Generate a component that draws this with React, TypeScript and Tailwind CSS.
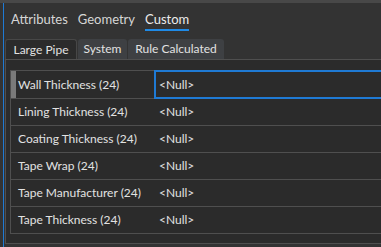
const rows = [
  'Wall Thickness (24)',
  'Lining Thickness (24)',
  'Coating Thickness (24)',
  'Tape Wrap (24)',
  'Tape Manufacturer (24)',
  'Tape Thickness (24)',
];

export default function App() {
  return (
    <div className="w-[381px] h-[247px] bg-[#333333] flex flex-col overflow-hidden text-[#e2e2e2] font-['Lato',sans-serif] whitespace-nowrap">
      <div className="h-[3px] bg-[#484848]" />
      <div className="flex-1 flex min-h-0">
        <div className="w-[3px]" />
        <div className="w-px bg-[#1f7ad4]" />
        <div className="flex-1 flex flex-col min-w-0">
          {/* top tabs */}
          <div className="h-[36px] flex items-start pl-[7px] gap-[10px] pt-[7px] text-[13px]">
            <span className="leading-[19px] text-[#d6d6d6]">Attributes</span>
            <span className="leading-[19px] text-[#d6d6d6]">Geometry</span>
            <span className="leading-[19px] border-b-2 border-[#1f8ae6] text-[#ececec]">Custom</span>
          </div>

          {/* sub tabs */}
          <div className="h-[20px] flex pl-px text-[12px] leading-[19px]">
            <div className="w-[72px] bg-[#2b2b2b] border border-b-0 border-[#474747] rounded-t-[3px] flex justify-center">
              Large Pipe
            </div>
            <div className="w-[49px] ml-px bg-[#3e4043] rounded-t-[3px] flex justify-center">System</div>
            <div className="w-[96px] ml-px bg-[#3e4043] rounded-t-[3px] flex justify-center">Rule Calculated</div>
          </div>

          {/* content panel */}
          <div className="flex-1 ml-px border-t border-l border-b border-[#4f4f4f] bg-[#2b2b2b] pt-[10px] pl-[4px] mb-[3px] overflow-hidden">
            <div className="w-[400px] border-l border-t border-b border-[#4f4f4f] text-[12px]">
              {rows.map((r, i) => (
                <div key={r} className={`h-[27px] flex ${i > 0 ? 'border-t border-[#4f4f4f]' : ''}`}>
                  <div className={`w-[5px] ${i === 0 ? 'bg-[#7a7a7a]' : ''}`} />
                  <div className="w-[138px] pl-[2px] flex items-center">{r}</div>
                  {i === 0 ? (
                    <div className="flex-1 border-2 border-[#1f7ad4] flex items-center pl-[3px] -my-px">
                      &lt;Null&gt;
                    </div>
                  ) : (
                    <div className="flex-1 flex items-center pl-[5px]">&lt;Null&gt;</div>
                  )}
                </div>
              ))}
            </div>
          </div>
        </div>
      </div>
    </div>
  );
}
